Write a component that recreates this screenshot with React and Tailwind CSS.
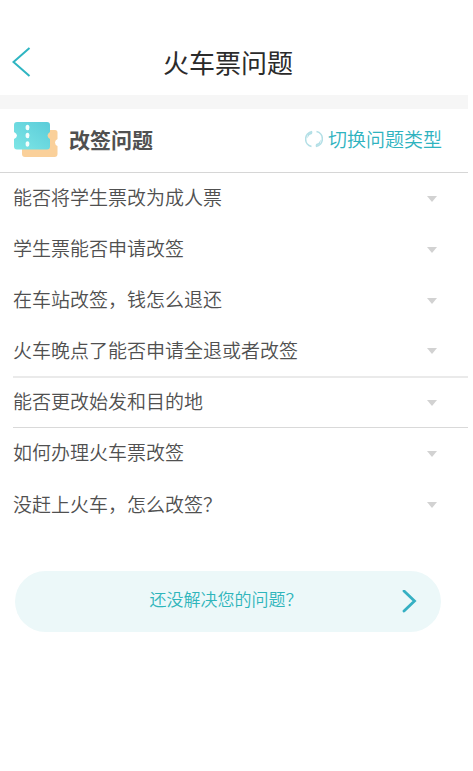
const questions = [
  { text: "能否将学生票改为成人票", row: "h-[51px]" },
  { text: "学生票能否申请改签", row: "h-[51px]" },
  { text: "在车站改签，钱怎么退还", row: "h-[51px]" },
  { text: "火车晚点了能否申请全退或者改签", row: "h-[52px] border-b-2 border-[#eaeaea]" },
  { text: "能否更改始发和目的地", row: "h-[50px] border-b border-[#d9d9d9]" },
  { text: "如何办理火车票改签", row: "h-[51px]" },
  { text: "没赶上火车，怎么改签？", row: "h-[52px]" },
];

function TicketIcon() {
  return (
    <svg className="h-[38px] w-[46px]" viewBox="0 0 46 38" aria-hidden="true">
      <defs>
        <linearGradient id="ticket" x1="0" y1="1" x2="1" y2="0">
          <stop offset="0" stopColor="#7ee6e6" />
          <stop offset="1" stopColor="#5accd9" />
        </linearGradient>
      </defs>
      <path
        d="M10 10h31q2.500 0 2.500 2.500V19q-2.500 1-2.500 3.500t2.500 3.500v8q0 3-3 3H11q-3 0-3-3V12z"
        fill="#fad09a"
      />
      <path
        d="M3 2h30q3 0 3 3v7q-2.500 1.500-2.500 3.500t2.500 3.500v7.500q0 3-3 3H3q-3 0-3-3V19q3-1.500 3-3.500T0 12V5q0-3 3-3z"
        fill="url(#ticket)"
      />
      <g fill="#f4fefd">
        <ellipse cx="13.500" cy="7.500" rx="1.900" ry="2.800" />
        <ellipse cx="13.500" cy="15.500" rx="1.900" ry="2.800" />
        <ellipse cx="13.500" cy="24" rx="1.900" ry="2.800" />
      </g>
    </svg>
  );
}

function SwitchIcon() {
  return (
    <svg
      className="h-[18px] w-[18px]"
      viewBox="0 0 18 18"
      fill="none"
      stroke="#b3dfe6"
      strokeWidth="1.6"
      aria-hidden="true"
    >
      <path d="M6.500 16.500A7.600 7.600 0 0 1 7 1.600" />
      <path d="M11.500 1.500A7.600 7.600 0 0 1 11 16.400" />
      <path d="M2 8.500 3 4 7.500 1.500 7 4 4.500 5z" fill="#b3dfe6" stroke="none" />
      <path d="M16 9.500 15 14l-4.500 2.500.5-2.500 2.500-1z" fill="#b3dfe6" stroke="none" />
    </svg>
  );
}

export default function App() {
  return (
    <div className="min-h-screen bg-white pr-[5px] font-['Noto_Sans_CJK_SC',sans-serif]">
      {/* Top bar */}
      <header className="grid h-[95px] grid-cols-[1fr_auto_1fr] items-center pt-7 pr-6 pl-3">
        <button type="button" aria-label="返回" className="w-[20px]">
          <svg
            className="h-[30px] w-[20px]"
            viewBox="0 0 20 30"
            fill="none"
            stroke="#2fb5c2"
            strokeWidth="2"
            aria-hidden="true"
          >
            <path d="M17.500 1 1.500 15l16 14" />
          </svg>
        </button>
        <h1 className="text-[26px] leading-8 text-[#2b2b2b]">火车票问题</h1>
      </header>

      <div className="h-[14px] bg-[#f6f6f6]" />

      <main>
        <section>
          <div className="flex h-16 items-center border-b border-[#d6d6d6] pr-[26px] pb-[3px] pl-[14px]">
            <TicketIcon />
            <h2 className="ml-[9px] text-[21px] leading-8 font-bold text-[#505050]">
              改签问题
            </h2>
            <button
              type="button"
              className="ml-auto flex items-center gap-[5px] text-[19px] leading-8 font-[350] text-[#2fb3bf]"
            >
              <SwitchIcon />
              切换问题类型
            </button>
          </div>

          <ul className="pl-[13px]">
            {questions.map((q) => (
              <li key={q.text} className={q.row}>
                <button
                  type="button"
                  aria-expanded="false"
                  className="flex h-full w-full items-center justify-between pr-[31px] text-left text-[19px] leading-8 font-[350] text-[#505050]"
                >
                  <span className="pb-[3px]">{q.text}</span>
                  <svg className="h-[6px] w-[10px]" viewBox="0 0 10 6" aria-hidden="true">
                    <path d="M0 0h10L5 6z" fill="#d2d2d2" />
                  </svg>
                </button>
              </li>
            ))}
          </ul>
        </section>

        <div className="pt-10 pr-[27px] pl-[15px]">
          <button
            type="button"
            className="grid h-[61px] w-full grid-cols-[1fr_auto_1fr] items-center rounded-full bg-[#ecf8f9] px-6 text-[17px] leading-7 font-[350] text-[#2fb5bb]"
          >
            <span className="col-start-2 pr-1 pb-[6px]">还没解决您的问题？</span>
            <svg
              className="h-6 w-4 justify-self-end"
              viewBox="0 0 16 24"
              fill="none"
              stroke="#36b0c3"
              strokeWidth="2.800"
              strokeLinecap="round"
              aria-hidden="true"
            >
              <path d="M3 1l10.500 10L3 21" />
            </svg>
          </button>
        </div>
      </main>
    </div>
  );
}
